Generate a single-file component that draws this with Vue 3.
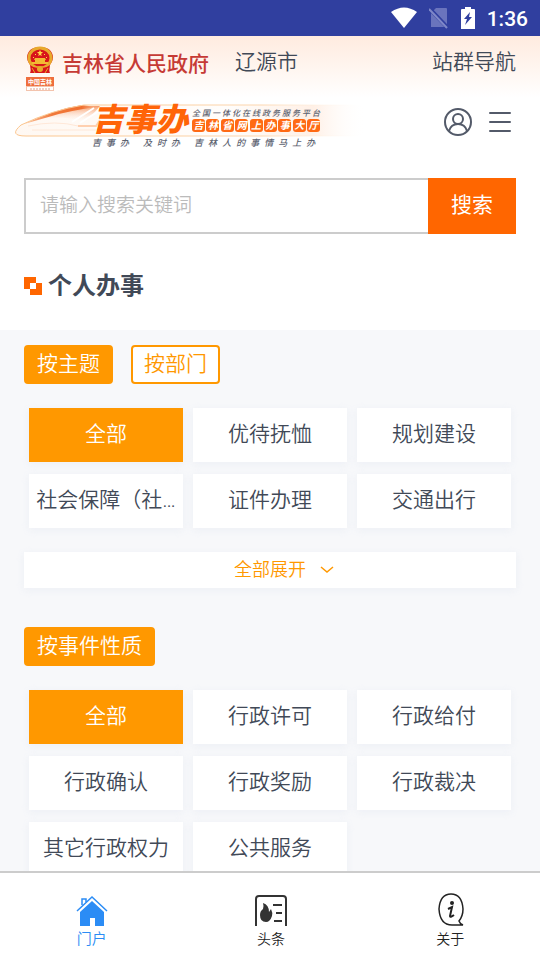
<script setup>
import { ref } from 'vue'

const keyword = ref('')
const groupBy = ref('按主题')
const theme = ref('全部')
const nature = ref('全部')

const groups = ['按主题', '按部门']
const themes = ['全部', '优待抚恤', '规划建设', '社会保障（社…', '证件办理', '交通出行']
const natures = ['全部', '行政许可', '行政给付', '行政确认', '行政奖励', '行政裁决', '其它行政权力', '公共服务']
const slogans = ['吉事办', '及时办', '吉林人的事情马上办']
</script>

<template>
  <div class="app">
    <div class="status">
      <svg width="26" height="22" viewBox="0 0 26 22">
        <path d="M0 5Q13-4 26 5L13 21Z" fill="#fff" />
      </svg>
      <svg width="20" height="22" viewBox="0 0 20 22">
        <path d="M7 1h10q1 0 1 1v18H2V6Z" fill="#6a74bd" />
        <path d="M0 1l19 20" stroke="#303f9f" stroke-width="4" />
        <path d="M0 2l18 19" stroke="#7f88c8" stroke-width="2" />
      </svg>
      <svg width="14" height="22" viewBox="0 0 14 22">
        <path d="M4 0h6v2h3q1 0 1 1v19H0V3q0-1 1-1h3Z" fill="#fff" />
        <path d="M9 5L3 12h3l-2 6 7-8H8Z" fill="#303f9f" />
      </svg>
      <span class="time">1:36</span>
    </div>

    <main class="page">
      <header class="gov">
        <svg class="emblem" width="28" height="46" viewBox="0 0 28 46">
          <path d="M6 21Q1 16 1 11Q2 1 14 1T27 11Q27 16 22 21L24 27H4Z" fill="#d92b1c" />
          <ellipse cx="14" cy="12" rx="11" ry="10" fill="#d8141b" stroke="#e8a92c" stroke-width="3" />
          <path d="M14 4l1 2h2l-2 2 1 2-2-1-2 1 1-2-2-2h2Z" fill="#ffd646" />
          <path d="M9 8h1v1H9ZM18 8h1v1h-1ZM7 11h1v1H7ZM20 11h1v1h-1Z" fill="#ffd646" />
          <path d="M9 12h10l1 2h-1v2h3v2H6v-2h3v-2H8Z" fill="#f3b934" />
          <path d="M4 19q5 4 10 2q5 2 10-2l-1 8H5Z" fill="#d8141b" />
          <circle cx="14" cy="23" r="3" fill="#e8a92c" />
          <path d="M6 22l3 5M22 22l-3 5" stroke="#e8a92c" />
          <rect y="31" width="28" height="9" fill="#ef6e3d" />
          <rect x="0.5" y="40.500" width="27" height="4" fill="#fff" stroke="#f3c3ad" />
          <text class="emblem-name" x="14" y="38" text-anchor="middle">中国吉林</text>
          <path d="M4 43h20" stroke="#e0a08c" stroke-dasharray="2 1" />
        </svg>
        <span class="gov-name">吉林省人民政府</span>
        <a class="link" href="#">辽源市</a>
        <a class="link nav-link" href="#">站群导航</a>
      </header>

      <div class="brand">
        <div class="banner">
          <svg class="train" viewBox="0 0 360 52" preserveAspectRatio="none">
            <defs>
              <linearGradient id="fade">
                <stop offset="0" stop-color="#fbc58d" />
                <stop offset="0.7" stop-color="#fcd6ae" />
                <stop offset="1" stop-color="#fff" stop-opacity="0" />
              </linearGradient>
              <linearGradient id="nose">
                <stop offset="0" stop-color="#fbc4a0" />
                <stop offset="0.4" stop-color="#f1793a" />
                <stop offset="0.8" stop-color="#f07030" />
                <stop offset="1" stop-color="#f9b890" />
              </linearGradient>
              <linearGradient id="glass" x1="0" y1="0" x2="0" y2="1">
                <stop offset="0" stop-color="#f79a66" />
                <stop offset="1" stop-color="#fff" stop-opacity="0" />
              </linearGradient>
              <linearGradient id="body">
                <stop offset="0" stop-color="#fff8f2" />
                <stop offset="0.6" stop-color="#fffdfb" />
                <stop offset="0.85" stop-color="#fff0e6" />
                <stop offset="1" stop-color="#fff" stop-opacity="0" />
              </linearGradient>
            </defs>
            <path d="M354 7H72Q40 12 9 27Q-4 38 14 38H354Z" fill="url(#body)" />
            <path d="M30 20Q54 10 72 8H88L74 24Q56 18 30 20Z" fill="url(#glass)" />
            <path d="M12 26Q44 11 70 7L84 9Q56 13 40 18Q26 22 12 26Z" fill="url(#nose)" />
            <path d="M60 24L82 10M68 25L90 11" stroke="#fff" stroke-width="2" />
            <path d="M66 28h18l4-6" fill="none" stroke="#ffd0b0" stroke-width="2" />
            <path d="M16 28Q44 22 66 28M20 32h64" fill="none" stroke="#ffe8d8" />
            <path d="M354 7H72Q40 12 9 27Q-4 38 14 38H354" fill="none" stroke="url(#fade)" />
          </svg>
          <div class="banner-main">
            <strong class="banner-name">吉事办</strong>
            <div class="banner-side">
              <div class="platform"><span v-for="c in '全国一体化在线政务服务平台'">{{ c }}</span></div>
              <div class="hall"><span v-for="c in '吉林省网上办事大厅'">{{ c }}</span></div>
            </div>
          </div>
          <div class="slogans">
            <div v-for="s in slogans" class="slogan"><span v-for="c in s">{{ c }}</span></div>
          </div>
        </div>
        <div class="brand-actions">
          <button class="icon-btn" aria-label="用户">
            <svg width="30" height="30" viewBox="0 0 30 30" fill="none" stroke="#535a69" stroke-width="2">
              <circle cx="15" cy="15" r="13" />
              <circle cx="15" cy="12" r="5" />
              <path d="M6 24Q8 17 15 17T24 24" />
            </svg>
          </button>
          <button class="icon-btn" aria-label="菜单">
            <svg width="24" height="30" viewBox="0 0 24 30" stroke="#535a69" stroke-width="2" stroke-linecap="round">
              <path d="M2 6h20M2 15h20M2 24h20" />
            </svg>
          </button>
        </div>
      </div>

      <form class="search" @submit.prevent>
        <input v-model="keyword" type="text" placeholder="请输入搜索关键词" aria-label="搜索关键词" />
        <button>搜索</button>
      </form>

      <h2 class="title">
        <svg width="18" height="18" viewBox="0 0 18 18">
          <path d="M0 0h12v6h6v12H6v-6H0Z" fill="#ff6600" />
          <path d="M6 6h6v6H6Z" fill="#fff" />
        </svg>
        个人办事
      </h2>

      <section class="filters">
        <div class="tabs">
          <button v-for="g in groups" class="tab" :class="{ active: groupBy === g }" @click="groupBy = g">{{ g }}</button>
        </div>
        <div class="grid">
          <button v-for="t in themes" class="tile" :class="{ active: theme === t }" @click="theme = t">{{ t }}</button>
        </div>
        <button class="expand">
          全部展开
          <svg width="14" height="8" viewBox="0 0 14 8" fill="none" stroke="#ff9800" stroke-width="1.500">
            <path d="M1 1l6 5 6-5" />
          </svg>
        </button>
        <div class="tabs">
          <button class="tab active">按事件性质</button>
        </div>
        <div class="grid">
          <button v-for="n in natures" class="tile" :class="{ active: nature === n }" @click="nature = n">{{ n }}</button>
        </div>
      </section>
    </main>

    <nav class="tabbar">
      <a class="current" href="#">
        <svg width="32" height="34" viewBox="0 0 32 34">
          <path d="M6 12V6h4v3" fill="none" stroke="#2b8cf5" stroke-width="1.500" />
          <path d="M1 18L16 4l15 14" fill="none" stroke="#2b8cf5" stroke-width="1.500" />
          <path d="M4 19L16 8l12 11v14h-9v-8h-5v8H4Z" fill="#2b8cf5" />
        </svg>
        门户
      </a>
      <a href="#">
        <svg width="32" height="34" viewBox="0 0 32 34">
          <path d="M1 33V6q0-3 3-3h24q3 0 3 3v27" fill="none" stroke="#333" stroke-width="2" />
          <path d="M8 10q6 2 6 9l2-3q2 4 1 7q-2 6-6 6q-6 0-6-7q0-4 3-6q1-3 0-6Z" fill="#333" />
          <path d="M18 12h9M21 20h6M19 28h8" stroke="#333" stroke-width="2" />
        </svg>
        头条
      </a>
      <a href="#">
        <svg width="32" height="34" viewBox="0 0 32 34">
          <path d="M25 28Q29 23 29 16Q28 1 17 1T5 16Q6 32 18 32H29Q26 31 25 28Z" fill="none" stroke="#222" stroke-width="1.500" />
          <circle cx="18" cy="10" r="2" fill="#222" />
          <path d="M14 16l4-2-2 9q0 2 4-1" fill="none" stroke="#222" stroke-width="2" />
        </svg>
        关于
      </a>
    </nav>
  </div>
</template>

<style>
body {
  margin: 0;
}
</style>

<style scoped>
.app {
  display: flex;
  flex-direction: column;
  height: 100vh;
  background: #fff;
  color: #414957;
  font: 350 21px/30px Roboto, "Noto Sans CJK SC", sans-serif;
}

button,
input {
  box-sizing: border-box;
  border: 0;
  margin: 0;
  padding: 0;
  font: inherit;
  color: inherit;
}

button {
  background: none;
  cursor: pointer;
}

a {
  color: inherit;
  text-decoration: none;
}

svg {
  flex: none;
}

.status {
  display: flex;
  flex: none;
  align-items: center;
  justify-content: flex-end;
  gap: 12px;
  height: 36px;
  padding-right: 12px;
  background: #303f9f;

  .time {
    color: #fff;
    font-weight: 500;
    padding-top: 2px;
  }
}

.page {
  display: flex;
  flex: 1;
  flex-direction: column;
  min-height: 0;
  overflow: auto;
  scrollbar-width: none;

  > * {
    flex: none;
  }
}

.gov {
  display: flex;
  align-items: flex-start;
  height: 62px;
  box-sizing: border-box;
  padding: 10px 24px 0 26px;
  background: linear-gradient(#ffebdf, #fff);

  .emblem-name {
    fill: #fff;
    font-size: 6px;
    font-weight: 700;
  }

  .gov-name {
    margin: 3px 26px 0 8px;
    color: #c63a35;
    font-weight: 500;
  }

  .link {
    padding-top: 1px;
  }

  .nav-link {
    margin-left: auto;
  }
}

.brand {
  display: flex;
  align-items: center;
  justify-content: space-between;
  height: 52px;
  padding: 0 28px 0 12px;
}

.banner {
  position: relative;
  width: 360px;
  box-sizing: border-box;
  padding: 6px 0 0 80px;
  font-style: italic;

  .train {
    position: absolute;
    top: 0;
    left: 0;
    width: 100%;
    height: 52px;
  }

  .banner-main {
    position: relative;
    display: flex;
    gap: 4px;
  }

  .banner-name {
    color: #ff6408;
    font-size: 32px;
    font-weight: 900;
    line-height: 32px;
  }

  .banner-side {
    width: 128px;
    padding-top: 5px;
  }

  .platform,
  .hall,
  .slogan {
    display: flex;
    justify-content: space-between;
  }

  .platform {
    color: #5c6270;
    font-size: 8px;
    font-weight: 500;
    line-height: 10px;
  }

  .hall span {
    width: 13px;
    border-radius: 3px;
    background: #ff6a14;
    color: #fff;
    font-size: 10px;
    font-weight: 700;
    line-height: 13px;
    text-align: center;
  }

  .slogans {
    position: relative;
    display: flex;
    gap: 14px;
    color: #5c6270;
    font-size: 9px;
    font-weight: 500;
    line-height: 14px;
  }

  .slogan {
    gap: 5px;
  }
}

.brand-actions {
  display: flex;
  gap: 15px;
  padding-bottom: 4px;

  .icon-btn {
    height: 30px;
  }
}

.search {
  display: flex;
  height: 56px;
  margin: 28px 24px 0;

  input {
    flex: 1;
    min-width: 0;
    border: 2px solid #ccc;
    border-right: 0;
    padding: 0 14px 1px;
    font-size: 19px;
  }

  input::placeholder {
    color: #bbb;
  }

  button {
    width: 88px;
    padding-bottom: 2px;
    background: #ff6600;
    color: #fff;
    font-weight: 400;
  }
}

.title {
  display: flex;
  align-items: center;
  gap: 6px;
  margin: 34px 24px 26px;
  font-size: 24px;
  font-weight: 700;
  line-height: 36px;
}

.filters {
  padding: 15px 24px 12px;
  background: #f7f8fa;
}

.tabs {
  display: flex;
  gap: 18px;
}

.tab {
  height: 39px;
  border: 2px solid #ff9800;
  border-radius: 4px;
  padding: 0 11px 1px;
  background: #fff;
  color: #ff9800;

  &.active {
    background: #ff9800;
    color: #fff;
  }
}

.grid {
  display: grid;
  grid-template-columns: repeat(3, minmax(0, 1fr));
  gap: 12px 10px;
  margin: 24px 5px;
}

.tile {
  height: 54px;
  padding: 0 6px 3px;
  overflow: hidden;
  background: #fff;
  box-shadow: 0 2px 8px #dfe3f066;
  text-overflow: ellipsis;
  white-space: nowrap;

  &.active {
    background: #ff9800;
    color: #fff;
  }
}

.expand {
  display: flex;
  align-items: center;
  justify-content: center;
  gap: 14px;
  width: 100%;
  height: 36px;
  margin-bottom: 39px;
  padding-left: 28px;
  background: #fff;
  box-shadow: 0 2px 8px #dfe3f066;
  color: #ff9800;
  font-size: 18px;
}

.tabbar {
  display: flex;
  flex: none;
  height: 87px;
  border-top: 2px solid #ccc;
  padding-left: 2px;
  background: #fff;
  color: #222;
  font-size: 14px;
  line-height: 24px;

  a {
    display: flex;
    flex: 1;
    flex-direction: column;
    align-items: center;
    padding-top: 20px;
  }

  .current {
    color: #2b8cf5;
    font-size: 15px;
  }
}
</style>
